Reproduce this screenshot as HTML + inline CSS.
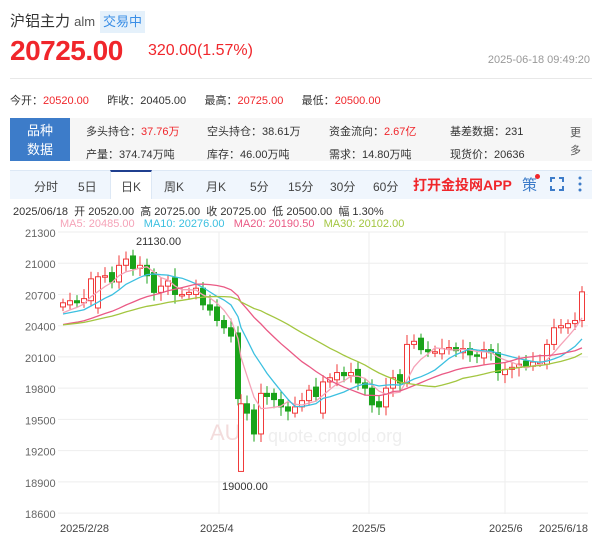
<!DOCTYPE html>
<html><head><meta charset="utf-8"><style>
*{margin:0;padding:0;box-sizing:border-box}
body{width:600px;height:535px;background:#fff;font-family:"Liberation Sans","Noto Sans CJK SC",sans-serif;position:relative;overflow:hidden;color:#333}
.a{position:absolute;white-space:nowrap}
.r{color:#f0262b}
</style></head><body>
<div class="a" style="left:10px;top:10px;font-size:15px;color:#333">沪铝主力 <span style="font-size:13px;color:#555">alm</span></div>
<div class="a" style="left:100px;top:11px;width:45px;height:22px;background:#e5f1fb;color:#3a8ee6;font-size:13px;line-height:22px;text-align:center">交易中</div>
<div class="a r" style="left:10px;top:35px;font-size:28px;font-weight:bold;letter-spacing:-0.5px">20725.00</div>
<div class="a r" style="left:148px;top:42px;font-size:16px">320.00(1.57%)</div>
<div class="a" style="right:10px;top:54px;font-size:11px;color:#999">2025-06-18 09:49:20</div>
<div class="a" style="left:10px;top:78px;width:582px;height:1px;background:#e8e8e8"></div>
<div class="a" style="left:10px;top:92px;font-size:11px;color:#333">今开：<span class="r">20520.00</span>&nbsp;&nbsp;&nbsp;&nbsp;&nbsp;&nbsp;昨收：20405.00&nbsp;&nbsp;&nbsp;&nbsp;&nbsp;&nbsp;最高：<span class="r">20725.00</span>&nbsp;&nbsp;&nbsp;&nbsp;&nbsp;&nbsp;最低：<span class="r">20500.00</span></div>
<div class="a" style="left:10px;top:118px;width:582px;height:43px;background:#f6f6f6"></div>
<div class="a" style="left:10px;top:118px;width:60px;height:43px;background:#3d7cc9;color:#fff;font-size:13px;line-height:19px;text-align:center;padding-top:3px">品种<br>数据</div>
<div class="a" style="left:86px;top:121px;font-size:11px;line-height:23px;color:#333">多头持仓：<span class="r">37.76万</span><br>产量：374.74万吨</div>
<div class="a" style="left:207px;top:121px;font-size:11px;line-height:23px">空头持仓：38.61万<br>库存：46.00万吨</div>
<div class="a" style="left:329px;top:121px;font-size:11px;line-height:23px">资金流向：<span class="r">2.67亿</span><br>需求：14.80万吨</div>
<div class="a" style="left:450px;top:121px;font-size:11px;line-height:23px">基差数据：231<br>现货价：20636</div>
<div class="a" style="left:570px;top:124px;font-size:11px;line-height:18px;color:#555;width:12px;white-space:normal">更多</div>
<div class="a" style="left:10px;top:170px;width:582px;height:29px;background:#f0f6fd;border-top:1px solid #dde8f5"></div>
<div class="a" style="left:110px;top:170px;width:42px;height:29px;background:#fff;border-top:2px solid #1f3f8f;border-left:1px solid #dde8f5;border-right:1px solid #dde8f5"></div>
<div class="a" style="left:0;top:178px;font-size:12px;color:#444;width:400px">
<span class="a" style="left:34px">分时</span><span class="a" style="left:78px">5日</span><span class="a" style="left:121px">日K</span><span class="a" style="left:164px">周K</span><span class="a" style="left:206px">月K</span><span class="a" style="left:250px">5分</span><span class="a" style="left:288px">15分</span><span class="a" style="left:330px">30分</span><span class="a" style="left:373px">60分</span></div>
<div class="a r" style="left:413px;top:175px;font-size:14px;font-weight:bold">打开金投网APP</div>
<div class="a" style="left:522px;top:174px;font-size:15px;color:#3d7cc9">策</div>
<div class="a" style="left:535px;top:174px;width:5px;height:5px;border-radius:3px;background:#f0262b"></div>
<svg class="a" style="left:550px;top:177px" width="14" height="14"><path d="M1 5V1H5M9 1H13V5M13 9V13H9M5 13H1V9" fill="none" stroke="#3d7cc9" stroke-width="2"/></svg>
<svg class="a" style="left:578px;top:176px" width="4" height="16"><circle cx="2" cy="2" r="1.5" fill="#3d7cc9"/><circle cx="2" cy="8" r="1.5" fill="#3d7cc9"/><circle cx="2" cy="14" r="1.5" fill="#3d7cc9"/></svg>
<div class="a" style="left:13px;top:203px;font-size:11px;color:#333">2025/06/18&nbsp; 开 20520.00&nbsp; 高 20725.00&nbsp; 收 20725.00&nbsp; 低 20500.00&nbsp; 幅 1.30%</div>
<div class="a" style="left:60px;top:218px;font-size:11px"><span style="color:#f5a3b8">MA5: 20485.00</span>&nbsp;&nbsp; <span style="color:#3cc0e0">MA10: 20276.00</span>&nbsp;&nbsp; <span style="color:#ea5a85">MA20: 20190.50</span>&nbsp;&nbsp; <span style="color:#a3c640">MA30: 20102.00</span></div>
<svg id="c" class="a" style="left:0;top:0" width="600" height="535"></svg>
<script>
var s=document.getElementById('c'),h='';
function Y(p){return 232+(21300-p)*0.1041}
var g=[21300,21000,20700,20400,20100,19800,19500,19200,18900,18600];
g.forEach(function(p){var y=Y(p);h+='<line x1="58" x2="588" y1="'+y+'" y2="'+y+'" stroke="#eee"/><text x="25" y="'+(y+5)+'" font-size="11" fill="#666" font-family="Liberation Sans">'+p+'</text>';});
[219,369,505].forEach(function(x){h+='<line x1="'+x+'" x2="'+x+'" y1="232" y2="514" stroke="#eee"/>'});
[[60,'2025/2/28'],[200,'2025/4'],[352,'2025/5'],[489,'2025/6'],[539,'2025/6/18']].forEach(function(d){h+='<text x="'+d[0]+'" y="532" font-size="11" fill="#444" font-family="Liberation Sans">'+d[1]+'</text>'});
h+='<text x="210" y="440" font-size="22" fill="#f3dcdc" font-family="Liberation Sans">AU</text><text x="268" y="442" font-size="18" fill="#eee" font-family="Liberation Sans">quote.cngold.org</text>';
var pts=[[63,20620],[70,20640],[77,20620],[84,20660],[91,20850],[98,20870],[105,20880],[112,20820],[119,20980],[126,21040],[133,20950],[140,20980],[147,20880],[154,20720],[161,20780],[168,20830],[175,20700],[182,20700],[189,20720],[196,20760],[203,20600],[210,20550],[217,20450],[224,20380],[231,20300],[238,19700],[241,19650],[247,19560],[254,19360],[261,19750],[267,19720],[274,19690],[281,19620],[288,19580],[295,19620],[302,19680],[309,19780],[316,19720],[323,19860],[330,19900],[337,19950],[344,19920],[351,19950],[358,19850],[365,19800],[372,19640],[379,19620],[386,19800],[393,19900],[400,19850],[407,20220],[414,20250],[421,20170],[428,20150],[435,20150],[442,20180],[449,20190],[456,20160],[463,20180],[470,20120],[477,20110],[484,20170],[491,20140],[498,19950],[505,19980],[512,20000],[519,20030],[526,20010],[533,20050],[540,20050],[547,20220],[554,20380],[561,20400],[568,20420],[575,20450],[582,20725]];
var prev=20600;
pts.forEach(function(q,i){var x=q[0],c=q[1],o=i==0?20580:(i%3==1?prev+(c>prev?-20:30):prev);if(i==5||i==38)o=c-300;var up=c>=o;var hi=Math.max(o,c)+40+(i*37%60),lo=Math.min(o,c)-40-(i*53%50);if(i==10)hi=21130;if(i==26){o=19000;c=19650;up=true;lo=19000}
var col=up?'#f03a3a':'#1aa31a';var y1=Y(Math.max(o,c)),y2=Y(Math.min(o,c));if(y2-y1<1.5)y2=y1+1.5;
h+='<line x1="'+x+'" x2="'+x+'" y1="'+Y(hi)+'" y2="'+Y(lo)+'" stroke="'+col+'"/>';
h+='<rect x="'+(x-2.5)+'" y="'+y1+'" width="5" height="'+(y2-y1)+'" fill="'+(up?'#fff':col)+'" stroke="'+col+'"/>';prev=c;});
function ma(n,col){var d='',cs=pts.map(function(p){return p[1]});for(var i=0;i<pts.length;i++){var a=0,k=0;for(var j=Math.max(0,i-n+1);j<=i;j++){a+=cs[j];k++}var pad=n-k;a+=pad*(20500+(n>10?-100:0));a/=n;d+=(i?'L':'M')+pts[i][0]+' '+Y(a).toFixed(1)}h+='<path d="'+d+'" fill="none" stroke="'+col+'" stroke-width="1.3"/>'}
ma(5,'#f5a3b8');ma(10,'#3cc0e0');ma(20,'#ea5a85');ma(30,'#a3c640');
h+='<text x="136" y="245" font-size="11" fill="#333" font-family="Liberation Sans">21130.00</text><text x="222" y="490" font-size="11" fill="#333" font-family="Liberation Sans">19000.00</text>';
s.innerHTML=h;
</script>
</body></html>
